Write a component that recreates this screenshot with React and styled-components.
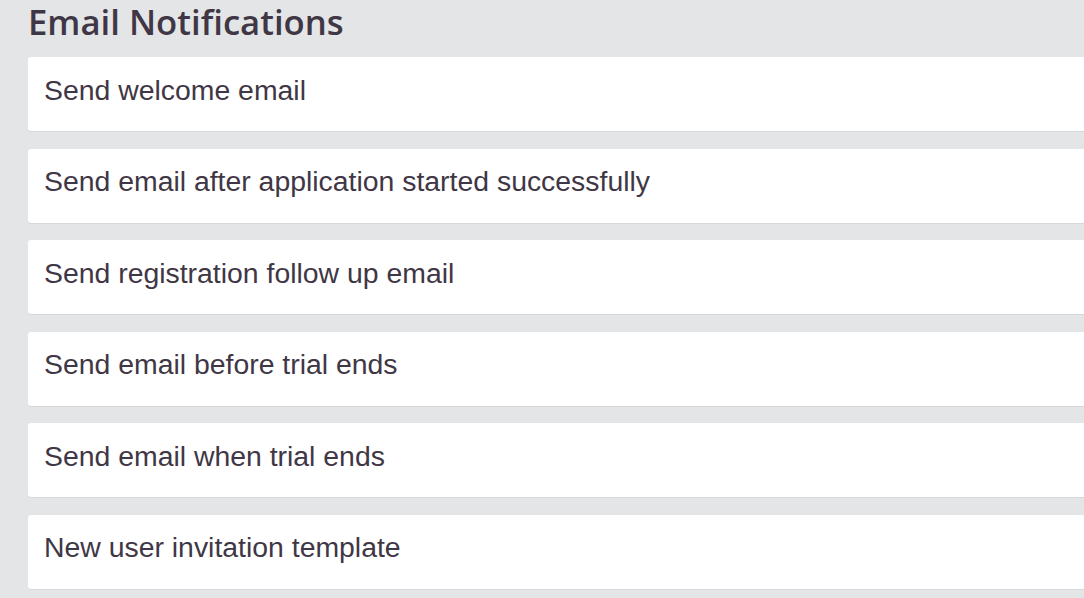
import React from 'react'
import styled, { createGlobalStyle } from 'styled-components'

const GlobalStyle = createGlobalStyle`
  html, body {
    margin: 0;
    padding: 0;
    background: #e4e5e7;
    overflow: hidden;
  }
`

const Page = styled.div`
  width: 1084px;
  height: 598px;
  overflow: hidden;
  background: #e4e5e7;
  padding-left: 28px;
  box-sizing: border-box;
`

const Title = styled.h2`
  margin: 0;
  height: 44px;
  line-height: 44px;
  font-family: 'Open Sans', sans-serif;
  font-weight: 600;
  font-size: 34.7px;
  color: #3f3745;
`

const List = styled.div`
  display: flex;
  flex-direction: column;
  gap: 17.6px;
  width: 1120px;
  margin-top: 13px;
`

const Card = styled.div`
  box-sizing: border-box;
  height: 74px;
  background: #fff;
  border-radius: 3px;
  box-shadow: 0 1px 0 #d6d7da;
  display: flex;
  align-items: center;
  padding: 0 16px 8px;
  font-family: 'Liberation Sans', Arial, sans-serif;
  font-size: 28.4px;
  color: #3f3745;
`

const items = [
  'Send welcome email',
  'Send email after application started successfully',
  'Send registration follow up email',
  'Send email before trial ends',
  'Send email when trial ends',
  'New user invitation template'
]

export default function App() {
  return (
    <>
      <GlobalStyle />
      <Page>
        <Title>Email Notifications</Title>
        <List>
          {items.map(item => (
            <Card key={item}>{item}</Card>
          ))}
        </List>
      </Page>
    </>
  )
}
